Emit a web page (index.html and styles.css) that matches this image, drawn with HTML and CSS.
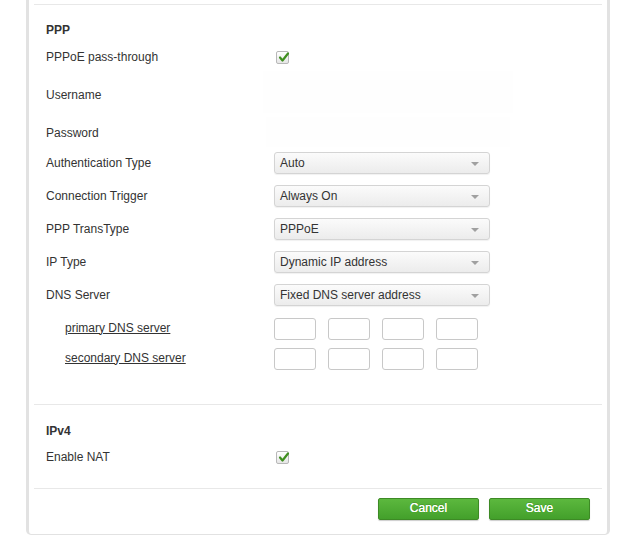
FILE: index.html
```html
<!DOCTYPE html>
<html>
<head>
<meta charset="utf-8">
<link rel="stylesheet" href="styles.css">
</head>
<body>
<div class="panel">
  <div class="section ppp">
    <div class="row head"><span class="title">PPP</span></div>
    <div class="row r-pppoe"><span class="label">PPPoE pass-through</span><span class="check"><svg width="13" height="13" viewBox="0 0 13 13"><path d="M3 6.5 L5.5 9.5 L11 2.5" fill="none" stroke="#3f8f1f" stroke-width="2.2" stroke-linecap="round" stroke-linejoin="round"/></svg></span></div>
    <div class="row r-user"><span class="label">Username</span><span class="ghost ghost-user"></span></div>
    <div class="row r-pass"><span class="label">Password</span><span class="ghost ghost-pass"></span></div>
    <div class="row r-sel"><span class="label">Authentication Type</span><div class="select">Auto<span class="caret"></span></div></div>
    <div class="row r-sel"><span class="label">Connection Trigger</span><div class="select">Always On<span class="caret"></span></div></div>
    <div class="row r-sel"><span class="label">PPP TransType</span><div class="select">PPPoE<span class="caret"></span></div></div>
    <div class="row r-sel"><span class="label">IP Type</span><div class="select">Dynamic IP address<span class="caret"></span></div></div>
    <div class="row r-sel"><span class="label">DNS Server</span><div class="select">Fixed DNS server address<span class="caret"></span></div></div>
    <div class="row r-dns1"><span class="label sub">primary DNS server</span><div class="ip"><span class="oct"></span><span class="oct"></span><span class="oct"></span><span class="oct"></span></div></div>
    <div class="row r-dns2"><span class="label sub">secondary DNS server</span><div class="ip"><span class="oct"></span><span class="oct"></span><span class="oct"></span><span class="oct"></span></div></div>
  </div>
  <div class="section ipv4">
    <div class="row head"><span class="title">IPv4</span></div>
    <div class="row r-nat"><span class="label">Enable NAT</span><span class="check"><svg width="13" height="13" viewBox="0 0 13 13"><path d="M3 6.5 L5.5 9.5 L11 2.5" fill="none" stroke="#3f8f1f" stroke-width="2.2" stroke-linecap="round" stroke-linejoin="round"/></svg></span></div>
  </div>
  <div class="footer">
    <button class="btn">Cancel</button>
    <button class="btn">Save</button>
  </div>
</div>
</body>
</html>
```
FILE: styles.css
```css
html, body {
  margin: 0;
  padding: 0;
  background: #fff;
  font-family: Arial, "Liberation Sans", sans-serif;
  font-size: 12px;
  color: #333;
}
.panel {
  margin-left: 26px;
  width: 584px;
  height: 535px;
  box-sizing: border-box;
  border-left: 3px solid #e2e2e2;
  border-right: 3px solid #e2e2e2;
  border-bottom: 1px solid #e2e2e2;
  border-radius: 0 0 5px 5px;
  padding: 4px 5px 0 5px;
}
.section {
  border-top: 1px solid #e8e8e8;
  padding: 15px 0 0 12px;
}
.ppp { height: 400px; box-sizing: border-box; }
.ipv4 { height: 84px; box-sizing: border-box; padding-top: 16px; }
.row {
  display: flex;
  align-items: center;
  position: relative;
}
.label {
  width: 228px;
  flex: none;
}
.label.sub {
  padding-left: 19px;
  box-sizing: border-box;
  text-decoration: underline;
}
.title { font-weight: bold; }
.head { height: 20px; }
.r-pppoe { height: 34px; }
.r-user { height: 42px; }
.r-pass { height: 30px; }
.r-pass .label { margin-top: 3px; }
.r-sel { height: 33px; }
.r-dns1 { height: 32px; }
.r-dns1 .label { margin-top: 1px; }
.r-dns2 { height: 28px; }
.r-dns2 .label { margin-top: 1px; }
.r-nat { height: 32px; }
.check {
  width: 11px;
  height: 11px;
  margin-left: 2px;
  border: 1px solid #b8b8b8;
  border-radius: 2px;
  background: linear-gradient(#fff, #e6e6e6);
  position: relative;
}
.check svg {
  position: absolute;
  left: 0;
  top: -1px;
}
.ghost {
  position: absolute;
  background: #fefefe;
}
.ghost-user { left: 217px; top: -3px; width: 250px; height: 42px; }
.ghost-pass { left: 220px; top: 1px; width: 244px; height: 30px; }
.select {
  width: 216px;
  height: 22px;
  box-sizing: border-box;
  border: 1px solid #d4d4d4;
  border-radius: 3px;
  background: linear-gradient(#fbfbfb, #ececec);
  box-shadow: 0 1px 1px rgba(0,0,0,0.06);
  padding-left: 5px;
  line-height: 20px;
  color: #333;
  position: relative;
  margin-top: 1px;
}
.caret {
  position: absolute;
  right: 10px;
  top: 9px;
  width: 0;
  height: 0;
  border-left: 4px solid transparent;
  border-right: 4px solid transparent;
  border-top: 4px solid #a0a0a0;
}
.ip {
  display: flex;
  gap: 12px;
}
.r-dns1 .ip { margin-top: 4px; }
.r-dns2 .ip { margin-top: 3px; }
.oct {
  width: 42px;
  height: 22px;
  box-sizing: border-box;
  border: 1px solid #c8c8c8;
  border-radius: 3px;
  background: #fff;
}
.footer {
  border-top: 1px solid #e8e8e8;
  display: flex;
  justify-content: flex-end;
  gap: 10px;
  padding: 9px 12px 0 0;
}
.btn {
  width: 101px;
  height: 22px;
  border: 1px solid #3d8a25;
  border-radius: 2px;
  background: linear-gradient(#5cb83e, #43a02b);
  color: #fff;
  font-family: Arial, "Liberation Sans", sans-serif;
  font-size: 12px;
  font-weight: normal;
  text-shadow: 0 0 0.4px #fff, 0 -1px 0 rgba(0,0,0,0.15);
  padding: 0 0 3px 0;
  box-shadow: 0 1px 1px rgba(0,0,0,0.2);
}
```
